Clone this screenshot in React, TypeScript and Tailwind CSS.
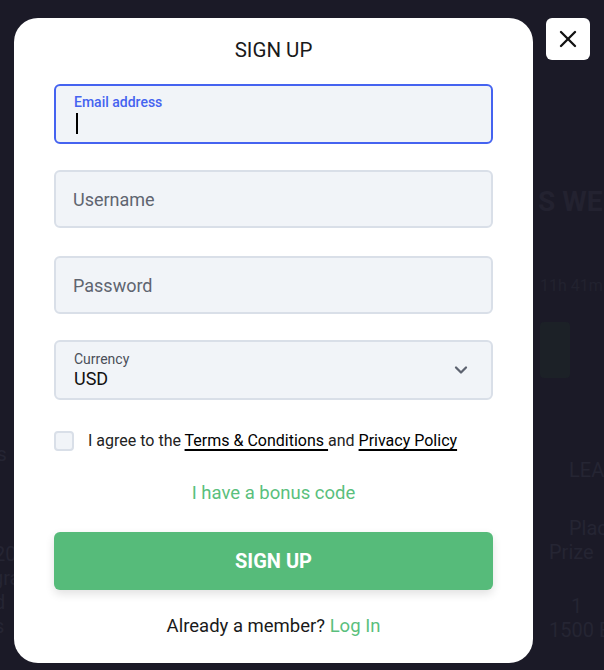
import { ChevronDown, X } from 'lucide-react';

const font = { fontFamily: 'Roboto, "Noto Sans", Arial, sans-serif' };

const Field = ({ placeholder }: { placeholder: string }) => (
  <div className="flex h-[58px] items-center rounded-md border-2 border-[#d9dfe8] bg-[#f1f4f8] px-[17px] text-[18px] text-[#5f6570]">
    {placeholder}
  </div>
);

// faint page content that shows through the overlay
const Backdrop = () => (
  <div className="absolute inset-0 flex justify-between text-[#252533]">
    <div className="flex w-[14px] flex-col overflow-hidden pt-[442px] text-[20px] leading-[24px]">
      <div className="-ml-[10px]">ts</div>
      <div className="mt-[76px] -ml-[6px]">20</div>
      <div className="-ml-[8px]">gra</div>
      <div className="-ml-[6px]">d s</div>
    </div>
    <div className="flex w-[70px] flex-col overflow-hidden pt-[190px] text-[20px] leading-[24px]">
      <div className="ml-[4px] whitespace-nowrap text-[28px] font-bold text-[#232230]">S WE</div>
      <div className="ml-[6px] mt-[60px] whitespace-nowrap text-[16px] text-[#22222f]">11h 41m</div>
      <div className="ml-[6px] mt-[24px] h-[56px] w-[30px] rounded bg-[#1c2127]" />
      <div className="ml-[35px] mt-[80px] whitespace-nowrap">LEAD</div>
      <div className="ml-[35px] mt-[34px] whitespace-nowrap">Place</div>
      <div className="ml-[15px] whitespace-nowrap">Prize</div>
      <div className="ml-[37px] mt-[30px] whitespace-nowrap">1</div>
      <div className="ml-[15px] whitespace-nowrap">1500 EUR</div>
    </div>
  </div>
);

export default function App() {
  return (
    <div className="relative h-[670px] w-[604px] overflow-hidden bg-[#1b1a27]" style={font}>
      <Backdrop />
      <div className="absolute inset-0 flex items-start pl-[14px] pt-[18px]">
        <div className="flex h-[645px] w-[519px] flex-col rounded-[24px] bg-white px-[40px] pt-[18px]">
          <h1 className="text-center text-[20.5px] leading-[28px] text-[#1a1a1a]">SIGN UP</h1>

          <div className="mt-[20px] flex h-[60px] flex-col rounded-md border-2 border-[#4563f0] bg-[#f1f4f8] px-[18px] pt-[7px]">
            <span className="text-[14px] font-medium leading-[18px] text-[#4563f0]">Email address</span>
            <span className="ml-[2px] mt-[2px] h-[21px] w-[2px] bg-black" />
          </div>

          <div className="mt-[26px]">
            <Field placeholder="Username" />
          </div>
          <div className="mt-[28px]">
            <Field placeholder="Password" />
          </div>

          <div className="mt-[26px] flex h-[60px] items-center rounded-md border-2 border-[#d9dfe8] bg-[#f1f4f8] pl-[18px] pr-[20px]">
            <div className="-mt-[1px] flex flex-1 flex-col">
              <span className="text-[14px] leading-[18px] text-[#4a4f58]">Currency</span>
              <span className="text-[18px] leading-[22px] text-[#111]">USD</span>
            </div>
            <ChevronDown className="h-[20px] w-[20px] text-[#5d6370]" strokeWidth={2.75} />
          </div>

          <div className="mt-[30px] flex items-center gap-[14px]">
            <span className="h-[20px] w-[20px] rounded border-2 border-[#d9dfe8] bg-[#f1f4f8]" />
            <span className="text-[16px] leading-[22px] text-[#222]">
              I agree to the{' '}
              <span className="underline decoration-[1.5px] underline-offset-[3px] text-black">Terms &amp; Conditions </span>
              and{' '}
              <span className="underline decoration-[1.5px] underline-offset-[3px] text-black">Privacy Policy</span>
            </span>
          </div>

          <div className="mt-[29px] text-center text-[18.5px] leading-[24px] text-[#5abf7d]">I have a bonus code</div>

          <button className="mt-[27px] h-[58px] rounded-md bg-[#56bb7a] text-[20px] font-bold text-white shadow-[0_4px_10px_rgba(0,0,0,0.12)]">
            SIGN UP
          </button>

          <div className="mt-[24px] text-center text-[18.5px] leading-[24px] text-[#1a1a1a]">
            Already a member? <span className="text-[#5abf7d]">Log In</span>
          </div>
        </div>

        <button className="ml-[13px] flex h-[42px] w-[44px] items-center justify-center rounded-md bg-white">
          <X className="h-[28px] w-[28px] text-[#111]" strokeWidth={2} />
        </button>
      </div>
    </div>
  );
}
